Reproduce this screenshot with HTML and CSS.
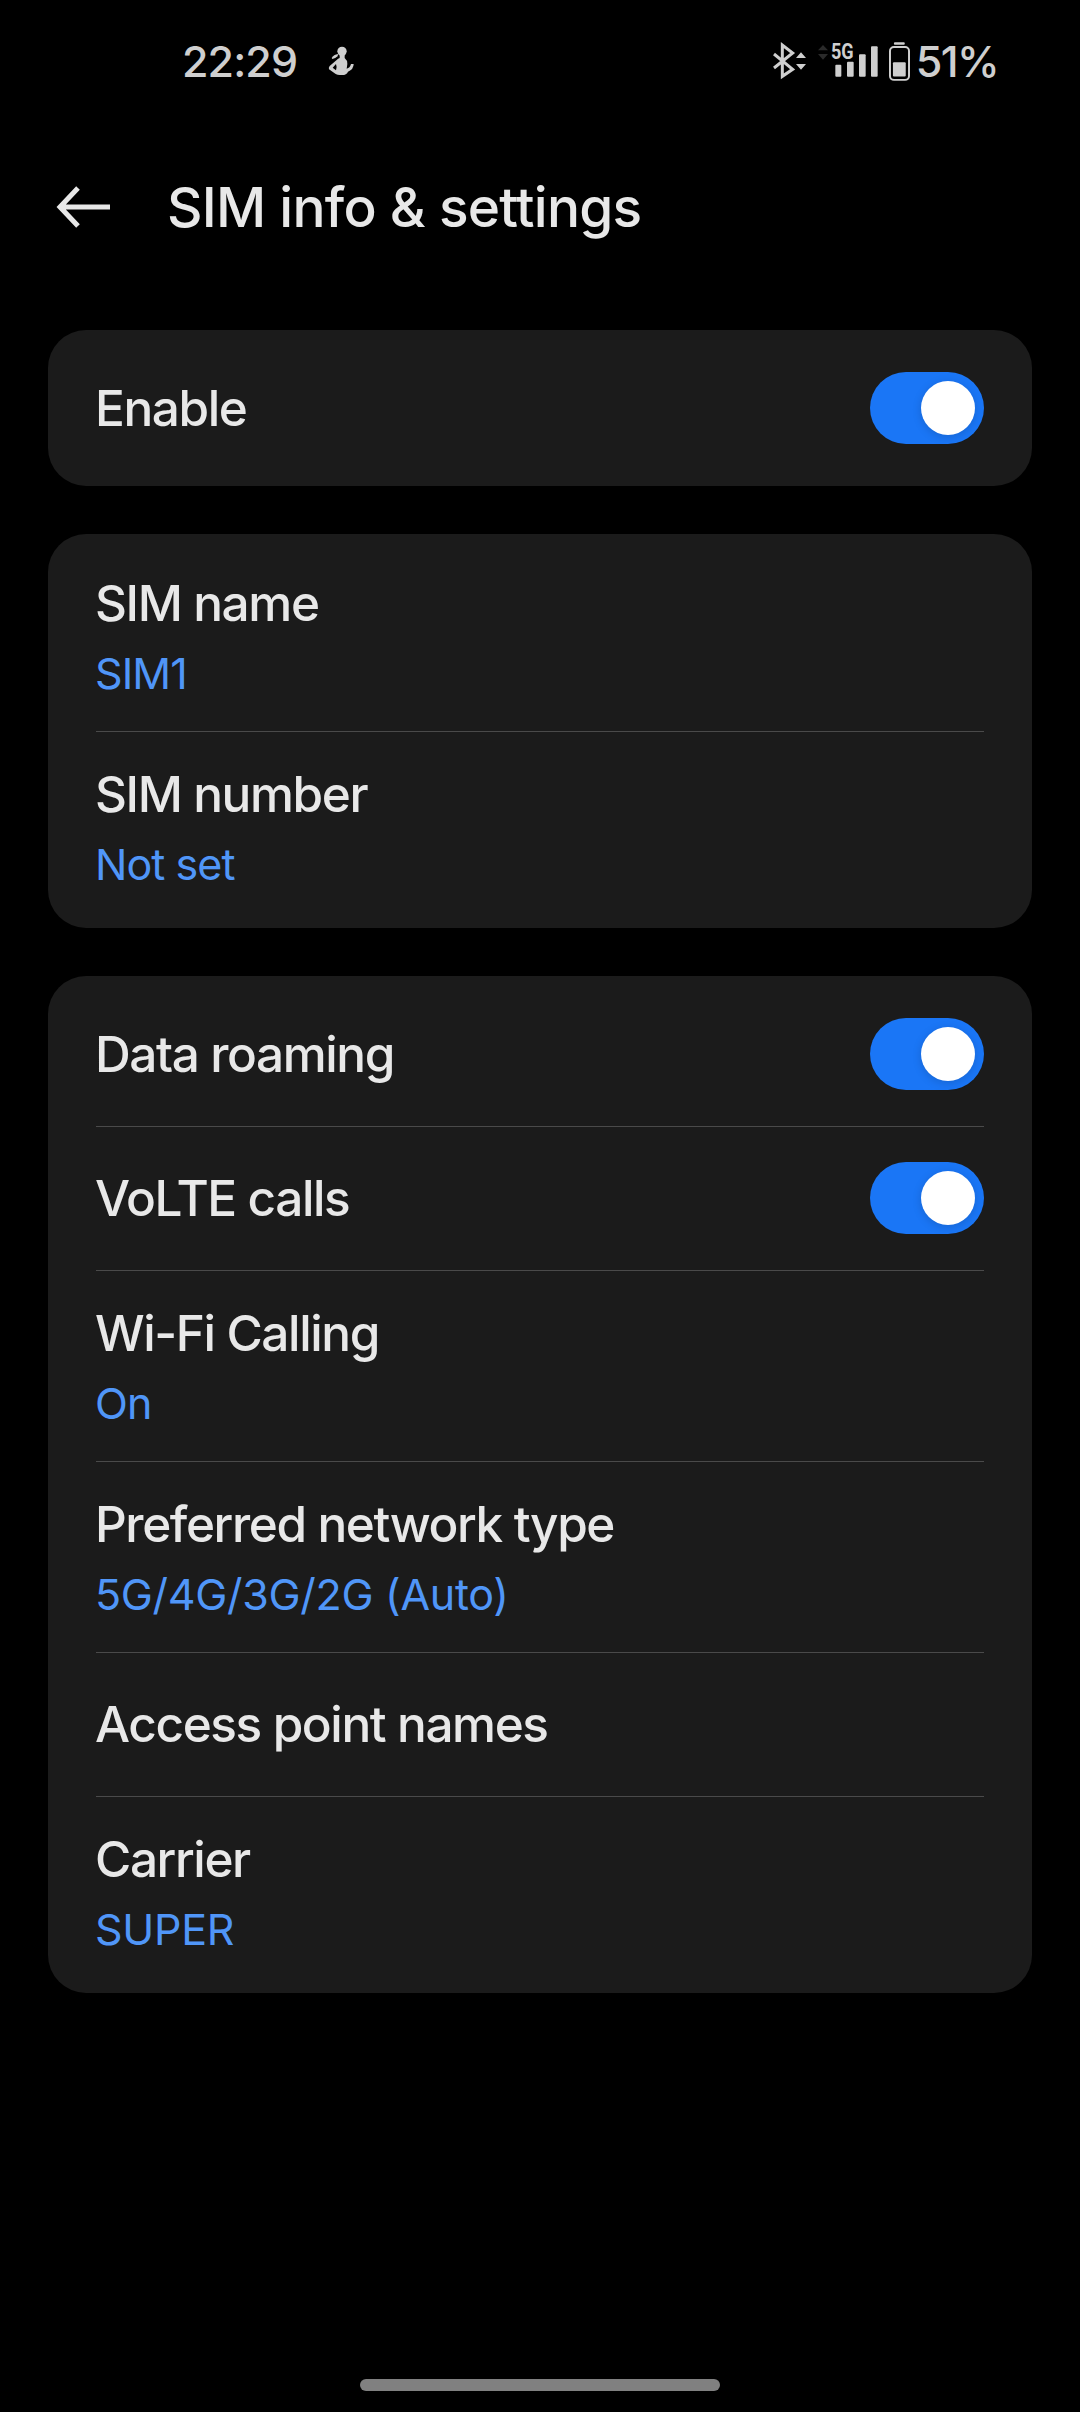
FILE: index.html
```html
<!DOCTYPE html>
<html lang="en">
<head>
    <meta charset="UTF-8">
    <title>SIM info &amp; settings</title>
    <link rel="stylesheet" href="styles.css">
</head>
<body>
    <header class="status-bar">
        <div class="status-left">
            <span class="clock">22:29</span>
            <svg class="icon-person" viewBox="0 0 81 90">
                <ellipse cx="42" cy="16" rx="14" ry="14"/>
                <path d="M11 36 Q17 26 30 24 L29 31 Q22 38 13 39 Z"/>
                <path d="M35 24 H50 V36 Q58 42 58 54 L56 68 Q66 66 69 54 H77 Q77 70 60 77 Q56 87 42 87 Q26 87 22 83 L3 70 Q1 65 5 60 L26 42 Q30 37 35 36 Z M24 54 L14 65 L24 73 Q28 64 24 54 Z" fill-rule="evenodd"/>
            </svg>
        </div>
        <div class="status-right">
            <svg class="icon-bluetooth" viewBox="0 0 102 102">
                <path d="M3 30 L59 76 L28 97 V3 L59 27 L3 72" fill="none" stroke="currentColor" stroke-width="9"/>
                <path d="M84 25 L99 42 H69 Z M69 60 H99 L84 77 Z"/>
            </svg>
            <svg class="icon-signal" viewBox="0 0 180 102">
                <path class="dim" d="M15 3 L30 19 H0 Z M0 30 H30 L15 47 Z"/>
                <text class="net-type" x="39" y="46" textLength="68" lengthAdjust="spacingAndGlyphs">5G</text>
                <rect x="52" y="62" width="18" height="36" rx="3"/>
                <rect x="87" y="53" width="20" height="45" rx="3"/>
                <rect x="123" y="31" width="20" height="67" rx="3"/>
                <rect x="159" y="7" width="20" height="91" rx="3"/>
            </svg>
            <svg class="icon-battery" viewBox="0 0 64 118">
                <rect x="15" y="0" width="33" height="8" rx="3"/>
                <rect x="3" y="15" width="58" height="100" rx="12" fill="none" stroke="currentColor" stroke-width="6"/>
                <rect x="12" y="61" width="39" height="44" rx="3"/>
            </svg>
            <span class="battery-level">51%</span>
        </div>
    </header>

    <div class="title-bar">
        <svg class="icon-back" viewBox="0 0 54 42">
            <path d="M21 2 L3 21 L21 40 M3 21 H53" fill="none" stroke="currentColor" stroke-width="5"/>
        </svg>
        <h1>SIM info &amp; settings</h1>
    </div>

    <main class="cards">
        <section class="card">
            <div class="row">
                <span class="label">Enable</span>
                <span class="toggle"></span>
            </div>
        </section>

        <section class="card">
            <div class="row two-line">
                <span class="label">SIM name</span>
                <span class="value">SIM1</span>
            </div>
            <div class="row two-line">
                <span class="label">SIM number</span>
                <span class="value">Not set</span>
            </div>
        </section>

        <section class="card">
            <div class="row">
                <span class="label">Data roaming</span>
                <span class="toggle"></span>
            </div>
            <div class="row">
                <span class="label">VoLTE calls</span>
                <span class="toggle"></span>
            </div>
            <div class="row two-line">
                <span class="label">Wi-Fi Calling</span>
                <span class="value">On</span>
            </div>
            <div class="row two-line">
                <span class="label">Preferred network type</span>
                <span class="value caps">5G/4G/3G/2G (Auto)</span>
            </div>
            <div class="row">
                <span class="label">Access point names</span>
            </div>
            <div class="row two-line">
                <span class="label">Carrier</span>
                <span class="value caps">SUPER</span>
            </div>
        </section>
    </main>

    <div class="nav-handle"></div>
</body>
</html>
```
FILE: styles.css
```css
* {
    box-sizing: border-box;
}
body {
    margin: 0;
    height: 2412px;
    display: flex;
    flex-direction: column;
    background: #000;
    color: #e8e8e8;
    font-family: Inter, Roboto, sans-serif;
}
svg {
    display: block;
    overflow: visible;
    fill: currentColor;
}

/* Status bar */
.status-bar {
    display: flex;
    justify-content: space-between;
    align-items: center;
    height: 122px;
    padding: 0 82px 0 182px;
    color: #cfcfcf;
    font-size: 43px;
    font-weight: 500;
}
.status-left, .status-right {
    display: flex;
    align-items: center;
}
.clock {
    letter-spacing: -0.9px;
}
.battery-level {
    letter-spacing: -1.6px;
}
.icon-person {
    width: 27px;
    height: 30px;
    margin-left: 31px;
}
.icon-bluetooth {
    width: 34px;
    height: 34px;
    margin-right: 11px;
}
.icon-signal {
    width: 60px;
    height: 34px;
    margin-right: 11px;
}
.icon-signal .dim {
    fill: #2a2a2a;
}
.net-type {
    font-family: Roboto, sans-serif;
    font-size: 64px;
    font-weight: 700;
}
.icon-battery {
    width: 21px;
    height: 39px;
    margin-right: 6px;
}

/* Title */
.title-bar {
    display: flex;
    align-items: center;
    height: 170px;
    margin-bottom: 38px;
    padding-left: 57px;
}
.icon-back {
    width: 54px;
    height: 42px;
    margin-right: 56px;
}
h1 {
    margin: 0;
    font-size: 55px;
    font-weight: 500;
    letter-spacing: -0.75px;
}

/* Cards */
.cards {
    display: flex;
    flex-direction: column;
    gap: 48px;
    padding: 0 48px;
}
.card {
    padding: 6px 48px;
    border-radius: 38px;
    background: #1b1b1b;
}
.row {
    display: flex;
    justify-content: space-between;
    align-items: center;
    height: 144px;
}
.row + .row {
    box-shadow: inset 0 1px #4a4a4a;
}
.two-line {
    flex-direction: column;
    justify-content: flex-start;
    align-items: flex-start;
    height: 191px;
    padding-top: 33px;
}
.label, .value {
    margin-left: -1px;
}
.label {
    font-size: 49.5px;
    font-weight: 500;
    line-height: 60px;
    letter-spacing: -1.4px;
}
.value {
    margin-top: 14px;
    color: #5096f8;
    font-size: 43px;
    line-height: 52px;
    letter-spacing: -0.95px;
}
.value.caps {
    letter-spacing: -0.3px;
}
.toggle {
    display: flex;
    justify-content: flex-end;
    width: 114px;
    height: 72px;
    padding: 9px;
    border-radius: 36px;
    background: #1a76f6;
}
.toggle::after {
    content: "";
    width: 54px;
    height: 54px;
    border-radius: 50%;
    background: #fff;
    box-shadow: 0 2px 10px rgba(0, 0, 0, 0.15);
}

/* Gesture handle */
.nav-handle {
    width: 360px;
    height: 12px;
    margin: auto auto 21px;
    border-radius: 6px;
    background: #808080;
}
```
